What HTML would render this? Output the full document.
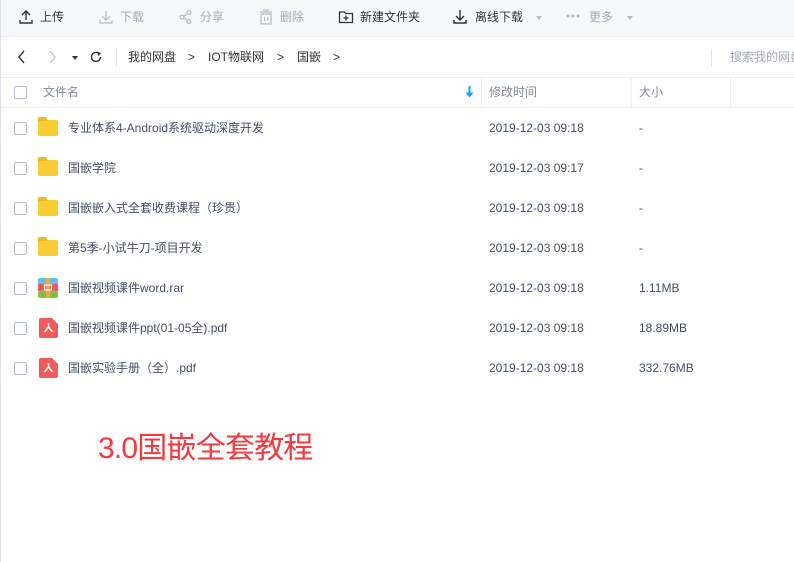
<!DOCTYPE html>
<html><head><meta charset="utf-8"><style>
*{margin:0;padding:0;box-sizing:border-box}
body{width:794px;height:562px;overflow:hidden;background:#fff;font-family:"Liberation Sans","Noto Sans CJK SC",sans-serif;font-size:12px;color:#424e67;position:relative}
.a{position:absolute;white-space:nowrap;line-height:16px}
.lb{position:absolute;left:0;top:0;width:1px;height:562px;background:#dfe1e6}
.tb{position:absolute;left:1px;top:0;width:793px;height:37px;background:#f7f8fa;border-bottom:1px solid #eceef2}
.cb{position:absolute;width:13px;height:13px;border:1px solid #b9bfca;border-radius:2px;left:14px}
.g{color:#a3a9b5}
.t{color:#333}
.hl{position:absolute;height:1px;background:#eef0f4;left:1px;width:793px}
.vl{position:absolute;width:1px;background:#eef0f4}
.row{position:absolute;left:0;width:794px;height:40px}
.fold{position:absolute;left:38px;width:20px;height:16px;background:#f9cc34;border-radius:2px}
.fold:before{content:"";position:absolute;left:0;top:-3px;width:9px;height:4px;background:#e9b92a;border-radius:2px 2px 0 0}
.tri{position:absolute;width:0;height:0;border-left:3.5px solid transparent;border-right:3.5px solid transparent;border-top:4px solid #b5bac4}
</style></head><body>
<div class="lb"></div>
<div class="tb"></div>
<svg class="a" style="left:18px;top:9px" width="16" height="16" viewBox="0 0 16 16"><path d="M8 11V2M4 6l4-4 4 4M2 11v3h12v-3" fill="none" stroke="#333" stroke-width="1.4"/></svg>
<div class="a t" style="left:40px;top:9px">上传</div>
<svg class="a" style="left:98px;top:9px" width="16" height="16" viewBox="0 0 16 16"><path d="M8 2v9M4 7l4 4 4-4M2 11v3h12v-3" fill="none" stroke="#b5bac4" stroke-width="1.2"/></svg>
<div class="a g" style="left:120px;top:9px">下载</div>
<svg class="a" style="left:178px;top:9px" width="16" height="16" viewBox="0 0 16 16"><g fill="none" stroke="#b5bac4" stroke-width="1.2"><circle cx="4" cy="8" r="2"/><circle cx="11" cy="3.5" r="2"/><circle cx="11" cy="12.5" r="2"/><path d="M6 7l3-2.5M6 9l3 2.5"/></g></svg>
<div class="a g" style="left:200px;top:9px">分享</div>
<svg class="a" style="left:258px;top:9px" width="16" height="16" viewBox="0 0 16 16"><g fill="none" stroke="#b5bac4" stroke-width="1.2"><path d="M2 3h12M5 1h6M3 5h10v10H3zM6.5 8v4M9.5 8v4"/></g></svg>
<div class="a g" style="left:280px;top:9px">删除</div>
<svg class="a" style="left:338px;top:9px" width="16" height="16" viewBox="0 0 16 16"><g fill="none" stroke="#333" stroke-width="1.3"><path d="M1.5 3h5l1 1.5h7v9h-13zM8 6.5v5M5.5 9h5"/></g></svg>
<div class="a t" style="left:360px;top:9px">新建文件夹</div>
<svg class="a" style="left:452px;top:9px" width="16" height="16" viewBox="0 0 16 16"><path d="M8 1v10M4 7l4 4 4-4M2 11v3h12v-3" fill="none" stroke="#333" stroke-width="1.4"/></svg>
<div class="a t" style="left:475px;top:9px">离线下载</div>
<div class="tri" style="left:536px;top:16px"></div>
<svg class="a" style="left:566px;top:14px" width="14" height="4" viewBox="0 0 14 4"><g fill="#b5bac4"><circle cx="2" cy="2" r="1.6"/><circle cx="7" cy="2" r="1.6"/><circle cx="12" cy="2" r="1.6"/></g></svg>
<div class="a g" style="left:589px;top:9px">更多</div>
<div class="tri" style="left:627px;top:16px"></div>

<svg class="a" style="left:16px;top:50px" width="12" height="14" viewBox="0 0 12 14"><path d="M8 1L3 7l5 6" fill="none" stroke="#333" stroke-width="1.4"/></svg>
<svg class="a" style="left:46px;top:50px" width="12" height="14" viewBox="0 0 12 14"><path d="M4 1l5 6-5 6" fill="none" stroke="#c5c9d0" stroke-width="1.4"/></svg>
<div class="tri" style="left:72px;top:56px;border-top-color:#333"></div>
<svg class="a" style="left:89px;top:50px" width="14" height="14" viewBox="0 0 14 14"><path d="M11.5 7A4.5 4.5 0 1 1 9.5 3.2" fill="none" stroke="#333" stroke-width="1.4"/><path d="M8 1.5l4 1.5-2.5 3z" fill="#333"/></svg>
<div class="vl" style="left:116px;top:49px;height:18px;background:#e1e4e9"></div>
<div class="a t" style="left:128px;top:49px">我的网盘</div>
<div class="a t" style="left:188px;top:49px">&gt;</div>
<div class="a t" style="left:208px;top:49px">IOT物联网</div>
<div class="a t" style="left:277px;top:49px">&gt;</div>
<div class="a t" style="left:297px;top:49px">国嵌</div>
<div class="a t" style="left:333px;top:49px">&gt;</div>
<div class="vl" style="left:711px;top:49px;height:18px;background:#e1e4e9"></div>
<div class="a g" style="left:730px;top:49px">搜索我的网盘</div>

<div class="hl" style="top:77px"></div>
<div class="hl" style="top:107px"></div>
<div class="cb" style="top:86px"></div>
<div class="a" style="left:43px;top:84px;color:#878c9c">文件名</div>
<svg class="a" style="left:465px;top:86px" width="9" height="12" viewBox="0 0 9 12"><path d="M4.5 0v9" stroke="#06a7ff" stroke-width="2"/><path d="M0.5 6.5h8L4.5 11.5z" fill="#06a7ff"/></svg>
<div class="vl" style="left:481px;top:78px;height:29px"></div>
<div class="a" style="left:489px;top:84px;color:#878c9c">修改时间</div>
<div class="vl" style="left:631px;top:78px;height:29px"></div>
<div class="a" style="left:639px;top:84px;color:#878c9c">大小</div>
<div class="vl" style="left:730px;top:78px;height:29px"></div>

<div class="row" style="top:108px"><div class="cb" style="top:14px"></div><div class="fold" style="top:12px"></div><div class="a" style="left:68px;top:12px">专业体系4-Android系统驱动深度开发</div><div class="a" style="left:489px;top:12px">2019-12-03 09:18</div><div class="a" style="left:639px;top:12px">-</div></div>
<div class="row" style="top:148px"><div class="cb" style="top:14px"></div><div class="fold" style="top:12px"></div><div class="a" style="left:68px;top:12px">国嵌学院</div><div class="a" style="left:489px;top:12px">2019-12-03 09:17</div><div class="a" style="left:639px;top:12px">-</div></div>
<div class="row" style="top:188px"><div class="cb" style="top:14px"></div><div class="fold" style="top:12px"></div><div class="a" style="left:68px;top:12px">国嵌嵌入式全套收费课程（珍贵）</div><div class="a" style="left:489px;top:12px">2019-12-03 09:18</div><div class="a" style="left:639px;top:12px">-</div></div>
<div class="row" style="top:228px"><div class="cb" style="top:14px"></div><div class="fold" style="top:12px"></div><div class="a" style="left:68px;top:12px">第5季-小试牛刀-项目开发</div><div class="a" style="left:489px;top:12px">2019-12-03 09:18</div><div class="a" style="left:639px;top:12px">-</div></div>
<div class="row" style="top:268px"><div class="cb" style="top:14px"></div>
<svg class="a" style="left:38px;top:10px" width="20" height="20" viewBox="0 0 20 20"><rect x="0" y="0" width="20" height="7" rx="2" fill="#5bc1f4"/><rect x="0" y="6" width="20" height="7" fill="#f25b5b"/><rect x="0" y="13" width="20" height="7" rx="2" fill="#7cc242"/><rect x="8" y="0" width="4" height="20" fill="#f7a73a"/><rect x="6.5" y="7" width="7" height="5" fill="none" stroke="#fff" stroke-width="1.3"/></svg>
<div class="a" style="left:68px;top:12px">国嵌视频课件word.rar</div><div class="a" style="left:489px;top:12px">2019-12-03 09:18</div><div class="a" style="left:639px;top:12px">1.11MB</div></div>
<div class="row" style="top:308px"><div class="cb" style="top:14px"></div>
<svg class="a" style="left:39px;top:10px" width="19" height="20" viewBox="0 0 19 20"><path d="M2 0h11l6 6v12a2 2 0 0 1-2 2H2a2 2 0 0 1-2-2V2a2 2 0 0 1 2-2z" fill="#f25b5b"/><path d="M9.5 5v4M9.5 9l-4 5M9.5 9l4 5" stroke="#fff" stroke-width="1.5" fill="none"/></svg>
<div class="a" style="left:68px;top:12px">国嵌视频课件ppt(01-05全).pdf</div><div class="a" style="left:489px;top:12px">2019-12-03 09:18</div><div class="a" style="left:639px;top:12px">18.89MB</div></div>
<div class="row" style="top:348px"><div class="cb" style="top:14px"></div>
<svg class="a" style="left:39px;top:10px" width="19" height="20" viewBox="0 0 19 20"><path d="M2 0h11l6 6v12a2 2 0 0 1-2 2H2a2 2 0 0 1-2-2V2a2 2 0 0 1 2-2z" fill="#f25b5b"/><path d="M9.5 5v4M9.5 9l-4 5M9.5 9l4 5" stroke="#fff" stroke-width="1.5" fill="none"/></svg>
<div class="a" style="left:68px;top:12px">国嵌实验手册（全）.pdf</div><div class="a" style="left:489px;top:12px">2019-12-03 09:18</div><div class="a" style="left:639px;top:12px">332.76MB</div></div>

<div class="a" style="left:98px;top:431px;font-size:30px;line-height:36px;color:#f5393d;letter-spacing:-0.8px">3.0国嵌全套教程</div>
</body></html>
